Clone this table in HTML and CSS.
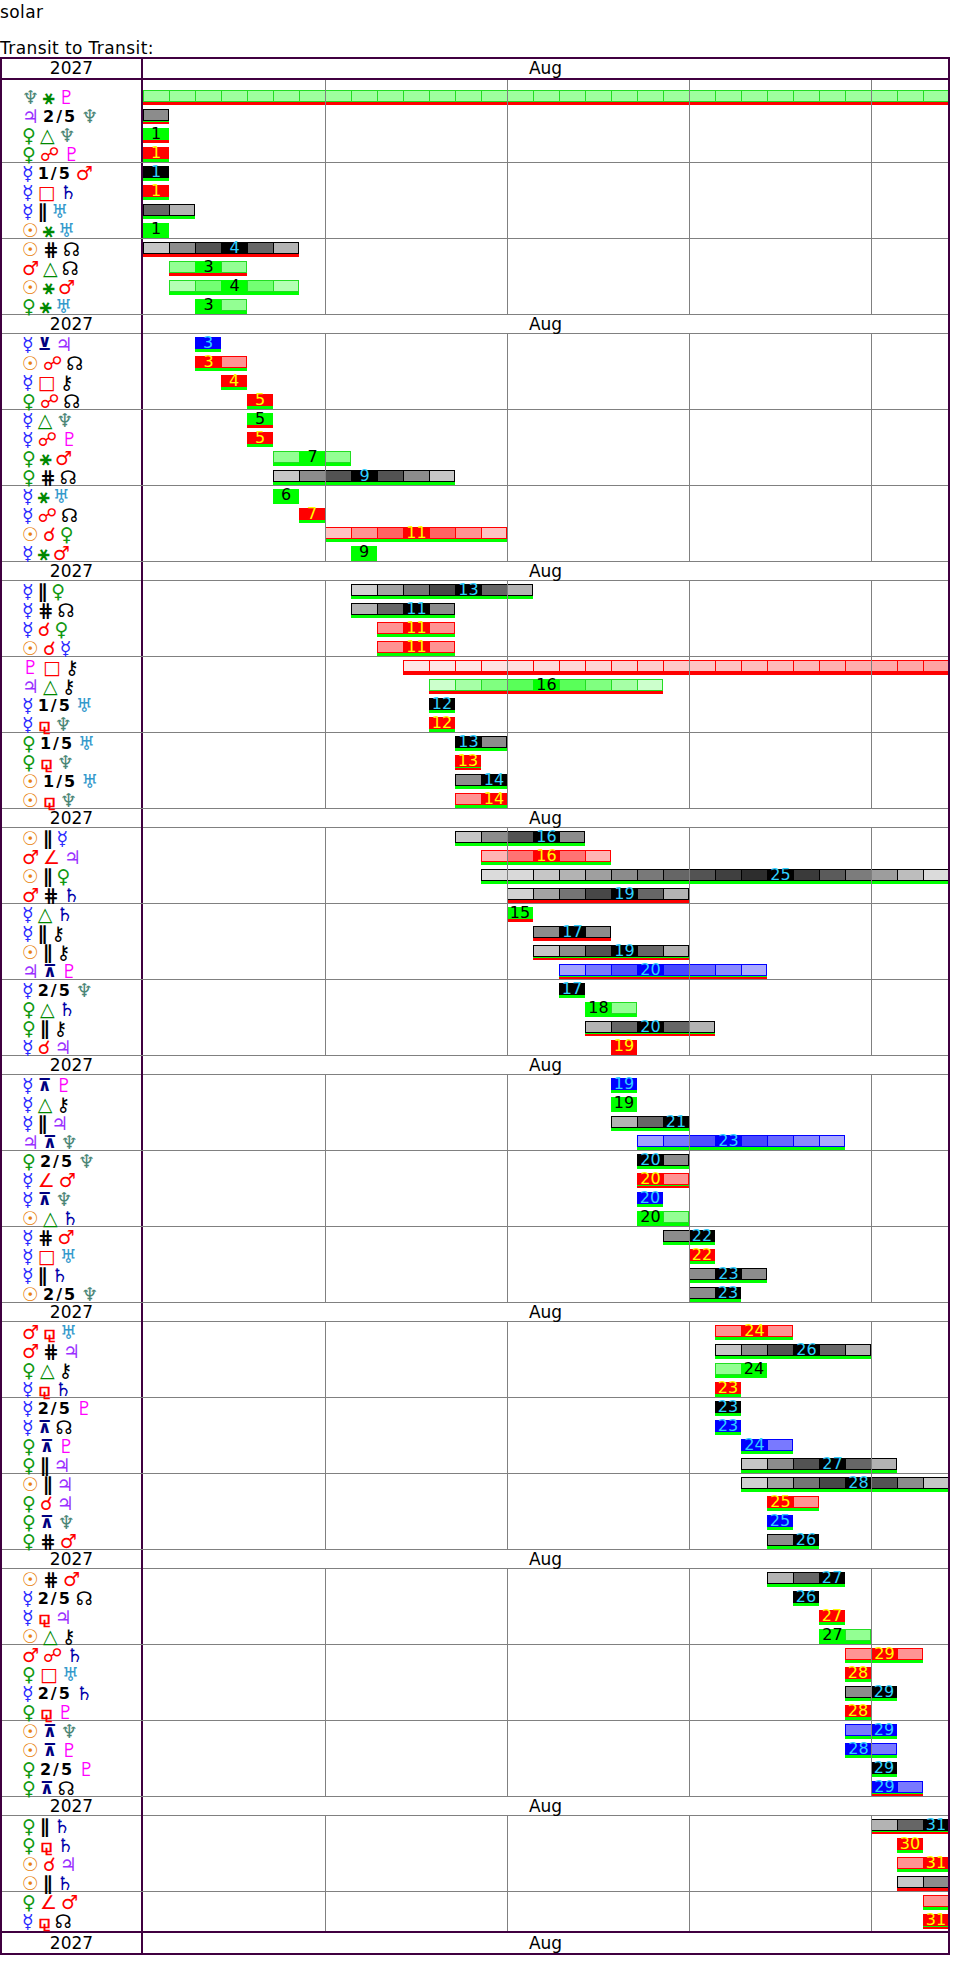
FILE: index.html
```html
<!DOCTYPE html>
<html>
<head>
<meta charset="utf-8">
<title>solar</title>
<link rel="stylesheet" href="styles.css">
</head>
<body>
<div class="intro">
  <div class="line">solar</div>
  <div class="line">&nbsp;</div>
  <div class="line">Transit to Transit:</div>
</div>
<div class="tt" id="tt"></div>
<script src="script.js"></script>
</body>
</html>
```

FILE: styles.css
```css
body {
  margin: 0;
  font-family: "DejaVu Sans", Verdana, sans-serif;
  font-size: 17px;
  color: #000;
  background: #fff;
}
.intro { padding-top: 3px; }
.line { height: 18px; line-height: 18px; letter-spacing: 0.4px; }

.tt {
  width: 950px;
  box-sizing: border-box;
  border: 2px solid #400040;
}

.hdr {
  display: grid;
  grid-template-columns: 141px 805px;
  line-height: 19px;
}
.hdr .yr {
  border-right: 2px solid #400040;
  text-align: center;
}
.hdr .mo { text-align: center; }
.h-first { height: 19px; border-bottom: 2px solid #400040; }
.h-mid { height: 18px; line-height: 19px; border-top: 1px solid #808080; }
.h-last { height: 20px; line-height: 21px; border-top: 2px solid #400040; }

.grp {
  display: grid;
  grid-template-columns: 141px 805px;
  border-top: 1px solid #808080;
}
.grp.first { border-top: none; }
.lab {
  border-right: 2px solid #400040;
  padding: 3px 0 0 20px;
  display: flex;
  flex-direction: column;
  gap: 4px;
}
.bars {
  position: relative;
  overflow: hidden;
  padding-top: 3px;
  display: flex;
  flex-direction: column;
  gap: 4px;
}
.grp.first .lab, .grp.first .bars { padding-top: 10px; }
.grp.last .lab, .grp.last .bars { padding-bottom: 2px; }
.bars::after {
  content: "";
  position: absolute;
  top: 0; left: 0; right: 0; bottom: 0;
  pointer-events: none;
  z-index: 2;
  background:
    linear-gradient(#808080, #808080) 182px 0 / 1px 100% no-repeat,
    linear-gradient(#808080, #808080) 364px 0 / 1px 100% no-repeat,
    linear-gradient(#808080, #808080) 546px 0 / 1px 100% no-repeat,
    linear-gradient(#808080, #808080) 728px 0 / 1px 100% no-repeat;
}

/* label rows */
.lr {
  height: 15px;
  display: flex;
  align-items: center;
  gap: 4px;
  font-size: 19px;
  line-height: 15px;
  white-space: nowrap;
}
.su { color: #e8820c; }
.me { color: #2a2aff; }
.ve { color: #119911; }
.ma { color: #ff0000; }
.ju { color: #9a30ff; }
.sa { color: #0000aa; }
.ur { color: #3399cc; }
.ne { color: #4a8575; }
.pl { color: #ff00ff; }
.no { color: #000; font-weight: bold; }
.ch { color: #000; }
.sx, .tr { color: #008800; }
.sx { font-weight: bold; }
.op, .sq, .cj, .ss, .sq15 { color: #ff0000; }
.sq15 { font-weight: bold; }
.pa, .cp { color: #000; font-weight: bold; }
.qx, .sxs { color: #000080; font-weight: bold; font-size: 17px; }
.q5 { color: #000; font-weight: bold; font-size: 16px; letter-spacing: 2px; }

/* bar rows */
.br {
  height: 15px;
  display: grid;
  grid-template-columns: repeat(31, 26px);
}
.d { height: 15px; }
.u-r { background: linear-gradient(transparent 12px, #ff0000 12px); }
.u-g { background: linear-gradient(transparent 12px, #00ff00 12px); }
.u-gr { background: linear-gradient(transparent 12px, #00ff00 12px, #00ff00 13px, #ff0000 13px); }

.f {
  height: 12px;
  box-sizing: border-box;
  border-style: solid;
  border-width: 1px 0 1px 1px;
  font-size: 16px;
  line-height: 10px;
  text-align: center;
  white-space: nowrap;
}
.f.end { border-right-width: 1px; }
.t-k { border-color: #000; }
.t-r { border-color: #ff0000; }
.t-g { border-color: #22dd22; }
.t-b { border-color: #0000ff; }
.f.pk.t-k { background: #000; color: #30d0ff; border-color: #000; }
.f.pk.t-r { background: #ff0000; color: #ffff00; border-color: #ff0000; }
.f.pk.t-g { background: #00ff00; color: #000; border-color: #00ff00; }
.f.pk.t-b { background: #0000ff; color: #30d0ff; border-color: #0000ff; }
```

FILE: script.js
```javascript
(function () {
  var DATA = [
    "♆ ⚹ ♇|1|31|-|r|.56",
    "♃ 2/5 ♆|1|1|0|gr",
    "♀ △ ♆|1|1|1|r",
    "♀ ☍ ♇|1|1|1|g",
    "☿ 1/5 ♂|1|1|1|g",
    "☿ □ ♄|1|1|1|g",
    "☿ ∥ ♅|1|2|0|g",
    "☉ ⚹ ♅|1|1|1|g",
    "☉ ⋕ ☊|1|6|4|r",
    "♂ △ ☊|2|4|3|r",
    "☉ ⚹ ♂|2|6|4|g",
    "♀ ⚹ ♅|3|4|3|g",

    "☿ ⊻ ♃|3|3|3|g",
    "☉ ☍ ☊|3|4|3|g",
    "☿ □ ⚷|4|4|4|g",
    "♀ ☍ ☊|5|5|5|g",
    "☿ △ ♆|5|5|5|r",
    "☿ ☍ ♇|5|5|5|g",
    "♀ ⚹ ♂|6|8|7|g",
    "♀ ⋕ ☊|6|12|9|g",
    "☿ ⚹ ♅|6|6|6|g",
    "☿ ☍ ☊|7|7|7|g",
    "☉ ☌ ♀|8|14|11|g",
    "☿ ⚹ ♂|9|9|9|g",

    "☿ ∥ ♀|9|15|13|g",
    "☿ ⋕ ☊|9|12|11|g",
    "☿ ☌ ♀|10|12|11|g",
    "☉ ☌ ☿|10|12|11|g",
    "♇ □ ⚷|11|31|60|r",
    "♃ △ ⚷|12|20|16|r",
    "☿ 1/5 ♅|12|12|12|g",
    "☿ ⚼ ♆|12|12|12|g",
    "♀ 1/5 ♅|13|14|13|g",
    "♀ ⚼ ♆|13|13|13|gr",
    "☉ 1/5 ♅|13|14|14|g",
    "☉ ⚼ ♆|13|14|14|g",

    "☉ ∥ ☿|13|17|16|g",
    "♂ ∠ ♃|14|18|16|g",
    "☉ ∥ ♀|14|31|25|g",
    "♂ ⋕ ♄|15|21|19|r",
    "☿ △ ♄|15|15|15|r",
    "☿ ∥ ⚷|16|18|17|r",
    "☉ ∥ ⚷|16|21|19|gr",
    "♃ ⊼ ♇|17|24|20|gr",
    "☿ 2/5 ♆|17|17|17|g",
    "♀ △ ♄|18|19|18|g",
    "♀ ∥ ⚷|18|22|20|gr",
    "☿ ☌ ♃|19|19|19|r",

    "☿ ⊼ ♇|19|19|19|g",
    "☿ △ ⚷|19|19|19|g",
    "☿ ∥ ♃|19|21|21|g",
    "♃ ⊼ ♆|20|27|23|g",
    "♀ 2/5 ♆|20|21|20|g",
    "☿ ∠ ♂|20|21|20|gr",
    "☿ ⊼ ♆|20|20|20|g",
    "☉ △ ♄|20|21|20|g",
    "☿ ⋕ ♂|21|22|22|g",
    "☿ □ ♅|22|22|22|g",
    "☿ ∥ ♄|22|24|23|g",
    "☉ 2/5 ♆|22|23|23|g",

    "♂ ⚼ ♅|23|25|24|g",
    "♂ ⋕ ♃|23|28|26|g",
    "♀ △ ⚷|23|24|24|g",
    "☿ ⚼ ♄|23|23|23|g",
    "☿ 2/5 ♇|23|23|23|g",
    "☿ ⊼ ☊|23|23|23|g",
    "♀ ⊼ ♇|24|25|24|g",
    "♀ ∥ ♃|24|29|27|g",
    "☉ ∥ ♃|24|31|28|g",
    "♀ ☌ ♃|25|26|25|g",
    "♀ ⊼ ♆|25|25|25|g",
    "♀ ⋕ ♂|25|26|26|g",

    "☉ ⋕ ♂|25|27|27|g",
    "☿ 2/5 ☊|26|26|26|g",
    "☿ ⚼ ♃|27|27|27|g",
    "☉ △ ⚷|27|28|27|g",
    "♂ ☍ ♄|28|30|29|g",
    "♀ □ ♅|28|28|28|g",
    "☿ 2/5 ♄|28|29|29|g",
    "♀ ⚼ ♇|28|28|28|g",
    "☉ ⊼ ♆|28|29|29|g",
    "☉ ⊼ ♇|28|29|28|g",
    "♀ 2/5 ♇|29|29|29|g",
    "♀ ⊼ ☊|29|30|29|gr",

    "♀ ∥ ♄|29|31|31|gr",
    "♀ ⚼ ♄|30|30|30|g",
    "☉ ☌ ♃|30|31|31|g",
    "☉ ∥ ♄|30|31|33|r",
    "♀ ∠ ♂|31|31|32|g",
    "☿ ⚼ ☊|31|31|31|gr"
  ];

  var CLS = {
    "☉": "su", "☿": "me", "♀": "ve", "♂": "ma", "♃": "ju", "♄": "sa",
    "♅": "ur", "♆": "ne", "♇": "pl", "☊": "no", "⚷": "ch",
    "⚹": "sx", "△": "tr", "☍": "op", "□": "sq", "☌": "cj", "∠": "ss",
    "⚼": "sq15", "∥": "pa", "⋕": "cp", "⊼": "qx", "⊻": "sxs",
    "1/5": "q5", "2/5": "q5"
  };
  var TYPE = {
    "⚹": "g", "△": "g", "☍": "r", "□": "r", "☌": "r", "∠": "r", "⚼": "r",
    "∥": "k", "⋕": "k", "1/5": "k", "2/5": "k", "⊼": "b", "⊻": "b"
  };

  function el(tag, cls, txt) {
    var e = document.createElement(tag);
    if (cls) e.className = cls;
    if (txt != null) e.textContent = txt;
    return e;
  }
  function hdr(c) {
    var h = el("div", "hdr " + c);
    h.appendChild(el("div", "yr", "2027"));
    h.appendChild(el("div", "mo", "Aug"));
    return h;
  }
  function color(type, t) {
    var v;
    if (type === "k") {
      v = Math.round(255 * Math.min(0.86, 0.1 + 0.9 * t));
      return "rgb(" + v + "," + v + "," + v + ")";
    }
    var w = type === "b" ? 0.15 + 0.65 * t : 0.2 + 0.75 * t;
    v = Math.round(255 * Math.min(w, 0.9));
    if (type === "r") return "rgb(255," + v + "," + v + ")";
    if (type === "g") return "rgb(" + v + ",255," + v + ")";
    return "rgb(" + v + "," + v + ",255)";
  }

  function labelRow(tokens) {
    var r = el("div", "lr");
    tokens.forEach(function (tk) { r.appendChild(el("span", CLS[tk] || "", tk)); });
    return r;
  }
  function barRow(tokens, s, e, p, u, flat) {
    var type = TYPE[tokens[1]];
    var r = el("div", "br");
    for (var d = s; d <= e; d++) {
      var c = el("div", "d u-" + u);
      c.style.gridColumn = String(d);
      var f = el("div", "f t-" + type);
      if (d === e) f.classList.add("end");
      if (p === d) {
        f.classList.add("pk");
        f.textContent = String(d);
      } else {
        var t;
        if (flat) t = flat;
        else if (d < p) t = (p - d) / (p - s + 1);
        else t = (d - p) / (e - p + 1);
        f.style.background = color(type, t);
      }
      c.appendChild(f);
      r.appendChild(c);
    }
    return r;
  }

  var tt = document.getElementById("tt");
  tt.appendChild(hdr("h-first"));

  var layout = [];
  for (var i = 0; i < 7; i++) layout.push([4, 4, 4]);
  layout.push([4, 2]);

  var idx = 0;
  layout.forEach(function (sec, si) {
    if (si > 0) tt.appendChild(hdr("h-mid"));
    sec.forEach(function (n, gi) {
      var g = el("div", "grp");
      if (si === 0 && gi === 0) g.classList.add("first");
      if (si === layout.length - 1 && gi === sec.length - 1) g.classList.add("last");
      var lab = el("div", "lab");
      var bars = el("div", "bars");
      for (var k = 0; k < n; k++) {
        var parts = DATA[idx++].split("|");
        var tokens = parts[0].split(" ");
        var s = +parts[1], e = +parts[2];
        var p = parts[3] === "-" ? null : +parts[3];
        var u = parts[4];
        var flat = parts[5] ? +parts[5] : 0;
        lab.appendChild(labelRow(tokens));
        bars.appendChild(barRow(tokens, s, e, p, u, flat));
      }
      g.appendChild(lab);
      g.appendChild(bars);
      tt.appendChild(g);
    });
  });

  tt.appendChild(hdr("h-last"));
})();
```
